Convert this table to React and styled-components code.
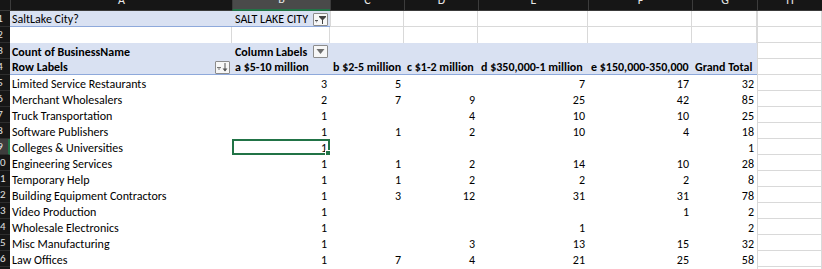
import React from "react";
import styled, { createGlobalStyle, css } from "styled-components";

const GlobalStyle = createGlobalStyle`
  html, body {
    margin: 0;
    padding: 0;
    background: #fff;
    overflow: hidden;
  }
  body {
    font-family: "Carlito", "Lato", "Liberation Sans", sans-serif;
  }
`;

const GREEN = "#217346";
const GRID = "#d9d9d9";
const BLUE = "#d9e1f2";
const BLUE_LINE = "#8ea9db";

const COLS = ["A", "B", "C", "D", "E", "F", "G", "H"];

const DATA = [
  ["Limited Service Restaurants", 3, 5, "", 7, 17, 32],
  ["Merchant Wholesalers", 2, 7, 9, 25, 42, 85],
  ["Truck Transportation", 1, "", 4, 10, 10, 25],
  ["Software Publishers", 1, 1, 2, 10, 4, 18],
  ["Colleges & Universities", 1, "", "", "", "", 1],
  ["Engineering Services", 1, 1, 2, 14, 10, 28],
  ["Temporary Help", 1, 1, 2, 2, 2, 8],
  ["Building Equipment Contractors", 1, 3, 12, 31, 31, 78],
  ["Video Production", 1, "", "", "", 1, 2],
  ["Wholesale Electronics", 1, "", "", 1, "", 2],
  ["Misc Manufacturing", 1, "", 3, 13, 15, 32],
  ["Law Offices", 1, 7, 4, 21, 25, 58],
];

const HEADERS = [
  "a $5-10 million",
  "b $2-5 million",
  "c $1-2 million",
  "d $350,000-1 million",
  "e $150,000-350,000",
  "Grand Total",
];

const Sheet = styled.div`
  display: grid;
  grid-template-columns: 10px 222px 98px 74px 74px 110px 104px 65px 65px;
  grid-template-rows: 11px;
  grid-auto-rows: 16px;
  width: 822px;
  height: 269px;
  overflow: hidden;
  font-size: 12px;
  color: #000;
`;

const Corner = styled.div`
  background: #161616;
  border-bottom: 1px solid #3a3a3a;
`;

const ColHead = styled.div`
  display: flex;
  justify-content: center;
  align-items: flex-end;
  overflow: hidden;
  box-sizing: border-box;
  padding-bottom: 4px;
  background: ${(p) => (p.$selected ? "#4a4a4a" : "#161616")};
  border-left: 1px solid #3c3c3c;
  border-bottom: ${(p) => (p.$selected ? `2px solid ${GREEN}` : "1px solid #3a3a3a")};
  color: #e8e8e8;
  font-size: 12px;
  line-height: 12px;
`;

const RowHead = styled.div`
  overflow: hidden;
  box-sizing: border-box;
  background: ${(p) => (p.$selected ? "#3d3d3d" : "#161616")};
  border-bottom: 1px solid #2e2e2e;
  border-right: ${(p) => (p.$selected ? `2px solid ${GREEN}` : "none")};
  color: #e0e0e0;
  font-size: 11px;
  line-height: 16px;
`;

const RowNum = styled.span`
  display: block;
  width: 20px;
  margin-left: -10px;
  text-align: center;
`;

const Cell = styled.div`
  position: relative;
  display: flex;
  align-items: flex-end;
  box-sizing: border-box;
  padding: 0 3px;
  white-space: nowrap;
  line-height: 13px;
  background: #fff;
  justify-content: ${(p) => (p.$num ? "flex-end" : "flex-start")};
  font-weight: ${(p) => (p.$bold ? 700 : 400)};
  ${(p) => p.$first && css`padding-left: 2px;`}
  ${(p) => p.$blue && css`background: ${BLUE};`}
  ${(p) =>
    p.$grid &&
    css`
      border-right: 1px solid ${GRID};
      border-bottom: 1px solid ${GRID};
    `}
  ${(p) => p.$vline && css`border-right: 1px solid ${GRID};`}
  ${(p) => p.$leftLine && css`border-left: 1px solid ${GRID};`}
  ${(p) => p.$blueBottom && css`border-bottom: 1px solid ${BLUE_LINE};`}
  ${(p) =>
    p.$active &&
    css`
      box-shadow: inset 0 0 0 2px ${GREEN};
    `}
`;

const Handle = styled.span`
  position: absolute;
  right: -2px;
  bottom: -2px;
  width: 5px;
  height: 5px;
  background: ${GREEN};
  border: 1px solid #fff;
`;

const Grow = styled.span`
  flex: 1;
`;

const DropButton = styled.span`
  display: flex;
  align-items: center;
  justify-content: center;
  align-self: center;
  box-sizing: border-box;
  width: 15px;
  height: 13px;
  margin: ${(p) => p.$drop || 0}px -1px 0 0;
  background: #f7f7f7;
  border: 1px solid #8c8c8c;
  border-radius: 1px;
`;

const FilterOnIcon = () => (
  <svg width="13" height="11" viewBox="0 0 13 11">
    <rect x="1" y="6" width="3" height="1" fill="#555" />
    <path d="M1.5 7.5 L3.5 7.5 L2.5 8.5 Z" fill="#555" />
    <path d="M5 2 H12 V3 L9 6 V10 H8 V6 L5 3 Z" fill="#444" />
  </svg>
);

const SortIcon = () => (
  <svg width="13" height="11" viewBox="0 0 13 11">
    <rect x="1" y="5" width="4" height="1" fill="#777" />
    <path d="M1.5 6.5 L4.5 6.5 L3 8 Z" fill="#777" />
    <rect x="8.5" y="1" width="1" height="8" fill="#555" />
    <path d="M6.5 6.5 L11.5 6.5 L9 9.5 Z" fill="#555" />
  </svg>
);

const ArrowIcon = () => (
  <svg width="13" height="11" viewBox="0 0 13 11">
    <path d="M2.5 3 L10.5 3 L6.5 8 Z" fill="#6e6e6e" />
  </svg>
);

const fmt = (v) => (v === "" ? "" : String(v));

export default function App() {
  return (
    <>
      <GlobalStyle />
      <Sheet>
        <Corner />
        {COLS.map((c) => (
          <ColHead key={c} $selected={c === "B"}>
            {c}
          </ColHead>
        ))}

        {/* row 1: report filter */}
        <RowHead>
          <RowNum>1</RowNum>
        </RowHead>
        <Cell $first $blue $blueBottom>
          SaltLake City?
        </Cell>
        <Cell $blue $blueBottom>
          SALT LAKE CITY
          <Grow />
          <DropButton $drop={1}>
            <FilterOnIcon />
          </DropButton>
        </Cell>
        {[0, 1, 2, 3, 4, 5].map((i) => (
          <Cell key={i} $grid $leftLine={i === 0 || i === 5} />
        ))}

        {/* row 2 */}
        <RowHead>
          <RowNum>2</RowNum>
        </RowHead>
        {[0, 1, 2, 3, 4, 5, 6].map((i) => (
          <Cell key={i} $vline />
        ))}
        <Cell $grid $leftLine />

        {/* row 3 */}
        <RowHead>
          <RowNum>3</RowNum>
        </RowHead>
        <Cell $first $blue $bold>
          Count of BusinessName
        </Cell>
        <Cell $blue $bold>
          Column Labels
          <Grow />
          <DropButton $drop={0}>
            <ArrowIcon />
          </DropButton>
        </Cell>
        {[0, 1, 2, 3, 4].map((i) => (
          <Cell key={i} $blue />
        ))}
        <Cell $grid $leftLine />

        {/* row 4 */}
        <RowHead>
          <RowNum>4</RowNum>
        </RowHead>
        <Cell $first $blue $bold $blueBottom>
          Row Labels
          <Grow />
          <DropButton $drop={1}>
            <SortIcon />
          </DropButton>
        </Cell>
        {HEADERS.map((h) => (
          <Cell key={h} $blue $bold $blueBottom>
            {h}
          </Cell>
        ))}
        <Cell $grid $leftLine />

        {DATA.map((row, r) => {
          const n = r + 5;
          return (
            <React.Fragment key={row[0]}>
              <RowHead $selected={n === 9}>
                <RowNum>{n}</RowNum>
              </RowHead>
              <Cell $first>{row[0]}</Cell>
              {row.slice(1).map((v, i) => (
                <Cell key={i} $num $active={n === 9 && i === 0}>
                  {fmt(v)}
                  {n === 9 && i === 0 && <Handle />}
                </Cell>
              ))}
              <Cell $grid $leftLine />
            </React.Fragment>
          );
        })}

        <RowHead>
          <RowNum>17</RowNum>
        </RowHead>
        <Cell />
        <Cell />
        <Cell />
        <Cell />
        <Cell />
        <Cell />
        <Cell />
        <Cell $grid $leftLine />
      </Sheet>
    </>
  );
}
